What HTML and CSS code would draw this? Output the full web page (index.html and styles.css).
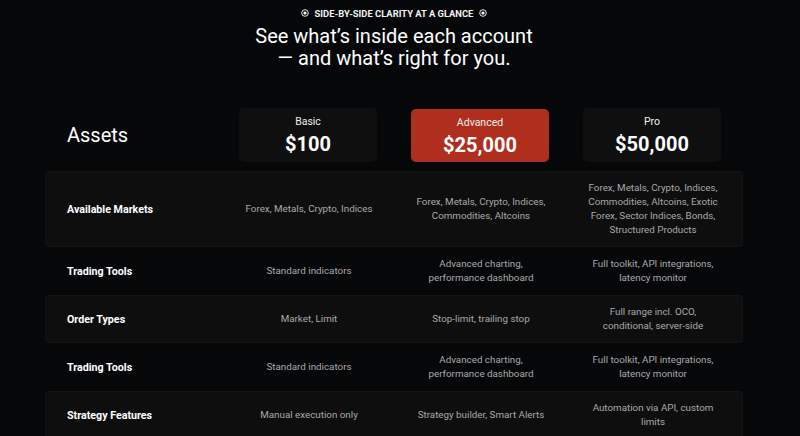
FILE: index.html
```html
<!DOCTYPE html>
<html lang="en">
<head>
<meta charset="utf-8">
<title>Account comparison</title>
<link rel="stylesheet" href="styles.css">
</head>
<body>
<div class="page">
  <header class="intro">
    <div class="eyebrow">
      <svg class="dot" viewBox="0 0 8 8" width="8" height="8"><circle cx="4" cy="4" r="3.3" fill="none" stroke="#fff" stroke-width="0.9"/><circle cx="4" cy="4" r="1.6" fill="#fff"/></svg>
      <span>SIDE-BY-SIDE CLARITY AT A GLANCE</span>
      <svg class="dot" viewBox="0 0 8 8" width="8" height="8"><circle cx="4" cy="4" r="3.3" fill="none" stroke="#fff" stroke-width="0.9"/><circle cx="4" cy="4" r="1.6" fill="#fff"/></svg>
    </div>
    <h1 class="title">See what’s inside each account<br>— and what’s right for you.</h1>
  </header>

  <section class="table">
    <div class="head">
      <div class="head-label">Assets</div>
      <div class="plan"><div class="plan-name">Basic</div><div class="plan-price">$100</div></div>
      <div class="plan plan-active"><div class="plan-name">Advanced</div><div class="plan-price">$25,000</div></div>
      <div class="plan"><div class="plan-name">Pro</div><div class="plan-price">$50,000</div></div>
    </div>

    <div class="row row-shaded">
      <div class="label">Available Markets</div>
      <div class="cell">Forex, Metals, Crypto, Indices</div>
      <div class="cell">Forex, Metals, Crypto, Indices,<br>Commodities, Altcoins</div>
      <div class="cell">Forex, Metals, Crypto, Indices,<br>Commodities, Altcoins, Exotic<br>Forex, Sector Indices, Bonds,<br>Structured Products</div>
    </div>
    <div class="row">
      <div class="label">Trading Tools</div>
      <div class="cell">Standard indicators</div>
      <div class="cell">Advanced charting,<br>performance dashboard</div>
      <div class="cell">Full toolkit, API integrations,<br>latency monitor</div>
    </div>
    <div class="row row-shaded">
      <div class="label">Order Types</div>
      <div class="cell">Market, Limit</div>
      <div class="cell">Stop-limit, trailing stop</div>
      <div class="cell">Full range incl. OCO,<br>conditional, server-side</div>
    </div>
    <div class="row">
      <div class="label">Trading Tools</div>
      <div class="cell">Standard indicators</div>
      <div class="cell">Advanced charting,<br>performance dashboard</div>
      <div class="cell">Full toolkit, API integrations,<br>latency monitor</div>
    </div>
    <div class="row row-shaded">
      <div class="label">Strategy Features</div>
      <div class="cell">Manual execution only</div>
      <div class="cell">Strategy builder, Smart Alerts</div>
      <div class="cell">Automation via API, custom<br>limits</div>
    </div>
  </section>
</div>
</body>
</html>
```

FILE: styles.css
```css
* { box-sizing: border-box; }
html, body {
  margin: 0;
  padding: 0;
  background: #060709;
  height: 436px;
  overflow: hidden;
}
body {
  font-family: Roboto, "Liberation Sans", Arial, sans-serif;
  color: #ffffff;
}
.page {
  width: 788px;
  padding-top: 6px;
}
.intro {
  display: flex;
  flex-direction: column;
  align-items: center;
}
.eyebrow {
  display: flex;
  align-items: center;
  gap: 6px;
  font-size: 9.4px;
  font-weight: 700;
  height: 14px;
  color: #f2f2f2;
}
.dot { display: block; }
.title {
  margin: 5px 0 0;
  font-size: 20px;
  font-weight: 400;
  line-height: 22px;
  text-align: center;
}
.table {
  width: 698px;
  margin: 39px auto 0;
}
.head, .row {
  display: grid;
  grid-template-columns: 177px 172px 172px 172px;
}
.head {
  align-items: center;
  margin-bottom: 9px;
}
.head-label {
  padding-left: 22px;
  font-size: 20px;
  font-weight: 400;
}
.plan {
  margin: 0 17px;
  height: 54px;
  border-radius: 5px;
  background: #0f0f10;
  display: flex;
  flex-direction: column;
  align-items: center;
  padding-top: 7px;
}
.plan-active { background: #b02e1e; height: 53px; }
.plan-name {
  font-size: 10.5px;
  line-height: 14px;
  color: #eeeeee;
}
.plan-price {
  font-size: 20px;
  font-weight: 700;
  line-height: 26px;
  margin-top: 2px;
}
.row {
  align-items: center;
  padding: 9px 0;
  min-height: 48px;
  border: 1px solid transparent;
  border-radius: 3px;
}
.row-shaded {
  background: #0e0e0f;
  border-color: #131314;
}
.label {
  padding-left: 21px;
  font-size: 10.7px;
  font-weight: 700;
  color: #ffffff;
}
.cell {
  font-size: 9.8px;
  line-height: 14px;
  color: #a9a9a9;
  text-align: center;
}
```
